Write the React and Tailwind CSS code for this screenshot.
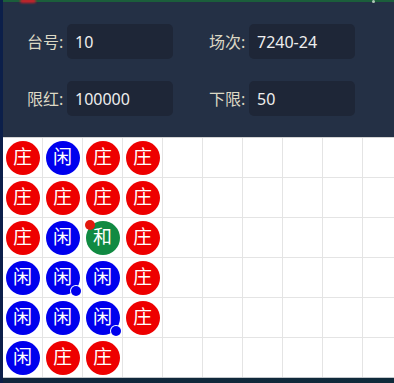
import React from "react";

const rows = [
  ["庄", "闲", "庄", "庄"],
  ["庄", "庄", "庄", "庄"],
  ["庄", "闲", "和", "庄"],
  ["闲", "闲", "闲", "庄"],
  ["闲", "闲", "闲", "庄"],
  ["闲", "庄", "庄"],
];

const dots = {
  "2-2": "red",
  "3-1": "blue",
  "4-2": "blue",
};

function Bead({ v, dot }) {
  const bg = v === "庄" ? "bg-[#ee0000]" : v === "闲" ? "bg-[#0000ee]" : "bg-[#118a42]";
  return (
    <div className={`relative w-[34px] h-[34px] rounded-full ${bg} flex items-center justify-center text-white text-[19px] leading-none`}>
      <span className="-mt-[1px]">{v}</span>
      {dot === "red" && (
        <span className="absolute left-[-1px] top-[-0.5px] w-[10px] h-[10px] rounded-full bg-[#e3180c]" />
      )}
      {dot === "blue" && (
        <span className="absolute right-[-1px] bottom-[-1px] w-[10px] h-[10px] rounded-full bg-[#0000ee] ring-1 ring-white" />
      )}
    </div>
  );
}

function Field({ label, value }) {
  return (
    <div className="flex items-center gap-[4px]">
      <span className="text-[16px] text-[#dcd8c4] w-[36px] whitespace-nowrap">{label}</span>
      <div className="w-[106px] h-[35px] rounded-[5px] bg-[#1e2637] flex items-center pl-[8px] text-[16px] text-[#eeeeee]">
        {value}
      </div>
    </div>
  );
}

export default function App() {
  return (
    <div
      className="w-[394px] h-[383px] overflow-hidden flex bg-[#0f2538]"
      style={{ fontFamily: '"Noto Sans", "Noto Sans CJK SC", sans-serif' }}
    >
      <div className="w-[3px] shrink-0 bg-[#0c1f4a]" />
      <div className="flex-1 flex flex-col min-w-0">
        <div className="relative h-[137px] bg-[#243045] border-t-2 border-[#1b5e3b]">
          <span className="absolute left-[17px] top-[-3px] w-[16px] h-[4px] rounded-full bg-[#c8202a] blur-[1px]" />
          <span className="absolute left-[369px] top-[-2px] w-[3px] h-[3px] rounded-full bg-[#b0c8b8]" />
          <div className="grid grid-cols-[182px_182px] gap-y-[22px] pl-[24px] pt-[22px]">
            <Field label="台号:" value="10" />
            <Field label="场次:" value="7240-24" />
            <Field label="限红:" value="100000" />
            <Field label="下限:" value="50" />
          </div>
        </div>
        <div className="bg-white border-t border-[#d4d4d4] border-b border-b-[#c4c8cc] overflow-hidden">
          {rows.map((r, i) => (
            <div key={i} className={`flex ${i < 5 ? "border-b border-[#e4e4e4]" : ""}`}>
              {Array.from({ length: 10 }).map((_, j) => (
                <div
                  key={j}
                  className="w-[40px] h-[39px] shrink-0 border-r border-[#e4e4e4] flex items-center justify-center"
                >
                  {r[j] && <Bead v={r[j]} dot={dots[`${i}-${j}`]} />}
                </div>
              ))}
            </div>
          ))}
        </div>
        <div className="flex-1 bg-gradient-to-r from-[#11263c] to-[#0f2a3a]" />
      </div>
    </div>
  );
}
